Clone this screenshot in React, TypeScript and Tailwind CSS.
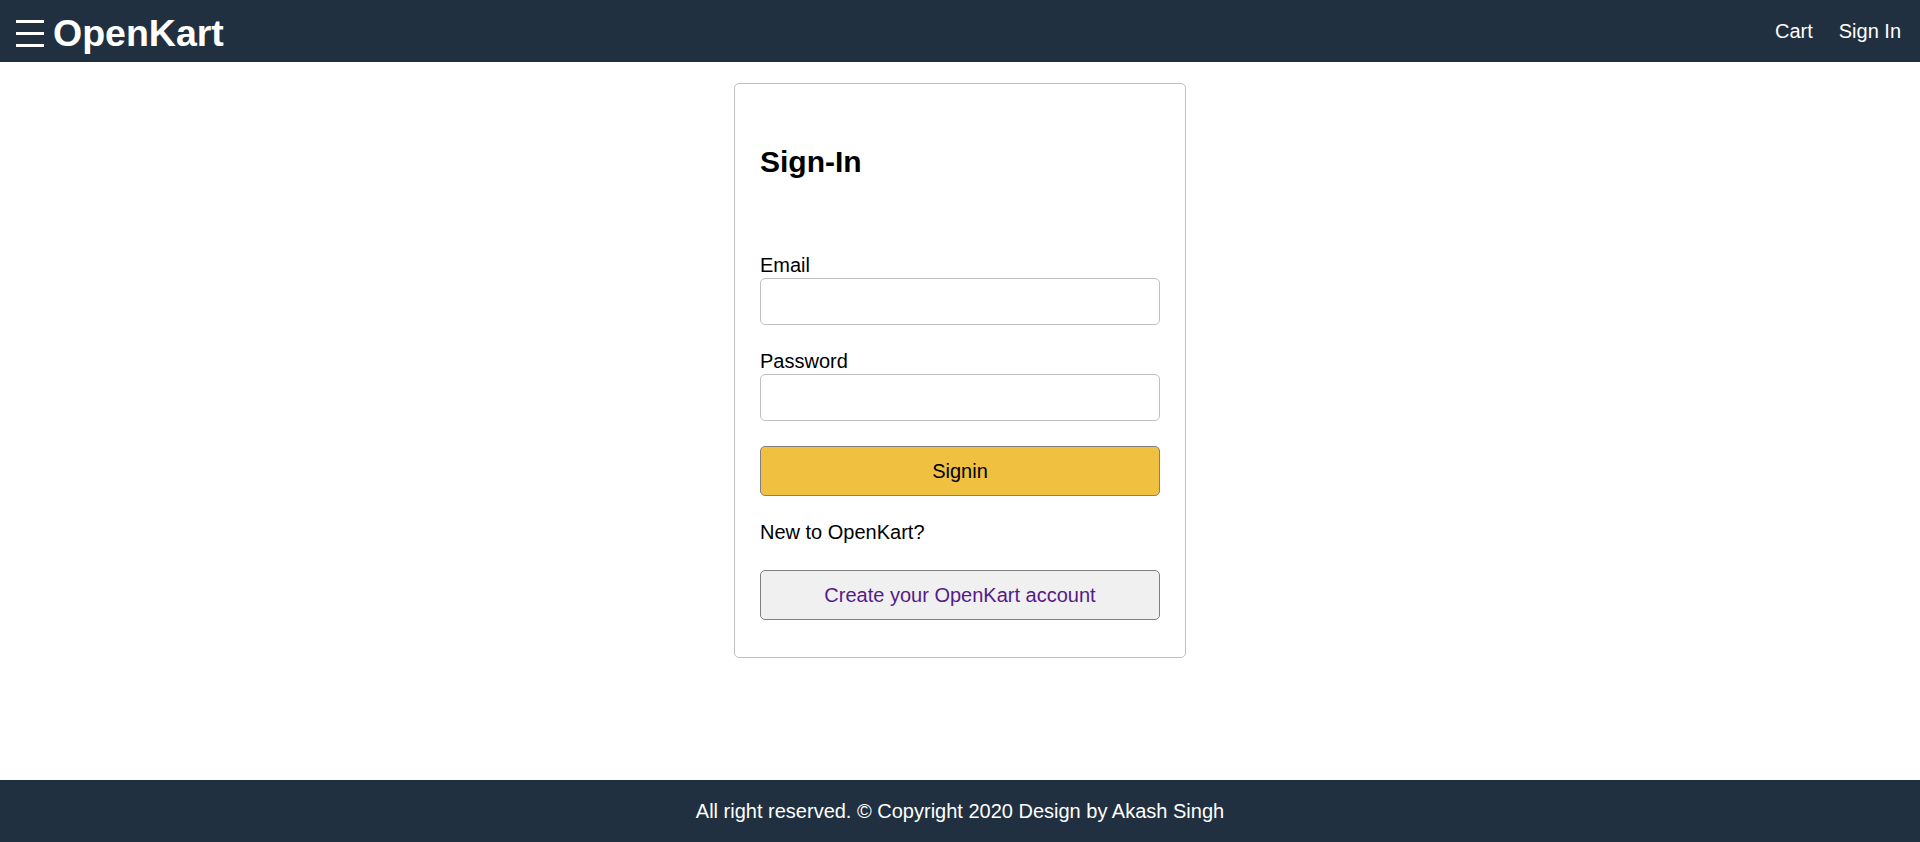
const font = { fontFamily: '"Liberation Sans", Arial, Helvetica, sans-serif' };

function Header() {
  return (
    <header className="h-[62px] shrink-0 bg-[#203040] flex items-center justify-between text-white">
      <div className="flex items-center">
        <button className="ml-[16px] mt-[5px] w-[28px] h-[27px] flex flex-col justify-between" aria-label="menu">
          <span className="block h-[3px] w-full bg-white" />
          <span className="block h-[3px] w-full bg-white" />
          <span className="block h-[3px] w-full bg-white" />
        </button>
        <a href="#" className="ml-[9px] mt-[4px] text-[37.5px] leading-[40px] font-bold text-white">
          OpenKart
        </a>
      </div>
      <nav className="flex items-center gap-[26px] pr-[19px] text-[20px] leading-[23px]">
        <a href="#" className="text-white">Cart</a>
        <a href="#" className="text-white">Sign In</a>
      </nav>
    </header>
  );
}

function Field({ label, type, id }: { label: string; type: string; id: string }) {
  return (
    <div>
      <label htmlFor={id} className="block text-[20px] leading-[23px] mb-[1px] text-black">
        {label}
      </label>
      <input
        id={id}
        type={type}
        className="block w-full h-[47px] border border-[#c0c0c0] rounded-[5px] bg-white px-2 text-[20px] outline-none"
      />
    </div>
  );
}

function SigninCard() {
  return (
    <form
      onSubmit={(e) => e.preventDefault()}
      className="w-[452px] border border-[#c0c0c0] rounded-[5px] bg-white px-[25px] pt-[61px] pb-[37px]"
    >
      <h2 className="text-[30px] leading-[34px] font-bold text-black">Sign-In</h2>
      <div className="mt-[75px] flex flex-col gap-[25px]">
        <Field label="Email" type="email" id="email" />
        <Field label="Password" type="password" id="password" />
        <button
          type="submit"
          className="h-[50px] w-full rounded-[5px] border border-[#808080] bg-[#f0c040] text-[20px] text-black"
        >
          Signin
        </button>
      </div>
      <p className="mt-[25px] text-[20px] leading-[23px] text-black">New to OpenKart?</p>
      <a
        href="#"
        className="mt-[26px] flex items-center justify-center h-[50px] w-full rounded-[5px] border border-[#808080] bg-[#f0f0f0] text-[20px] text-[#551a8b]"
      >
        Create your OpenKart account
      </a>
    </form>
  );
}

export default function App() {
  return (
    <div className="h-screen flex flex-col bg-white" style={font}>
      <Header />
      <main className="flex-1 flex justify-center items-start pt-[21px]">
        <SigninCard />
      </main>
      <footer className="h-[62px] shrink-0 bg-[#203040] flex items-center justify-center text-white text-[20px]">
        All right reserved. © Copyright 2020 Design by Akash Singh
      </footer>
    </div>
  );
}
